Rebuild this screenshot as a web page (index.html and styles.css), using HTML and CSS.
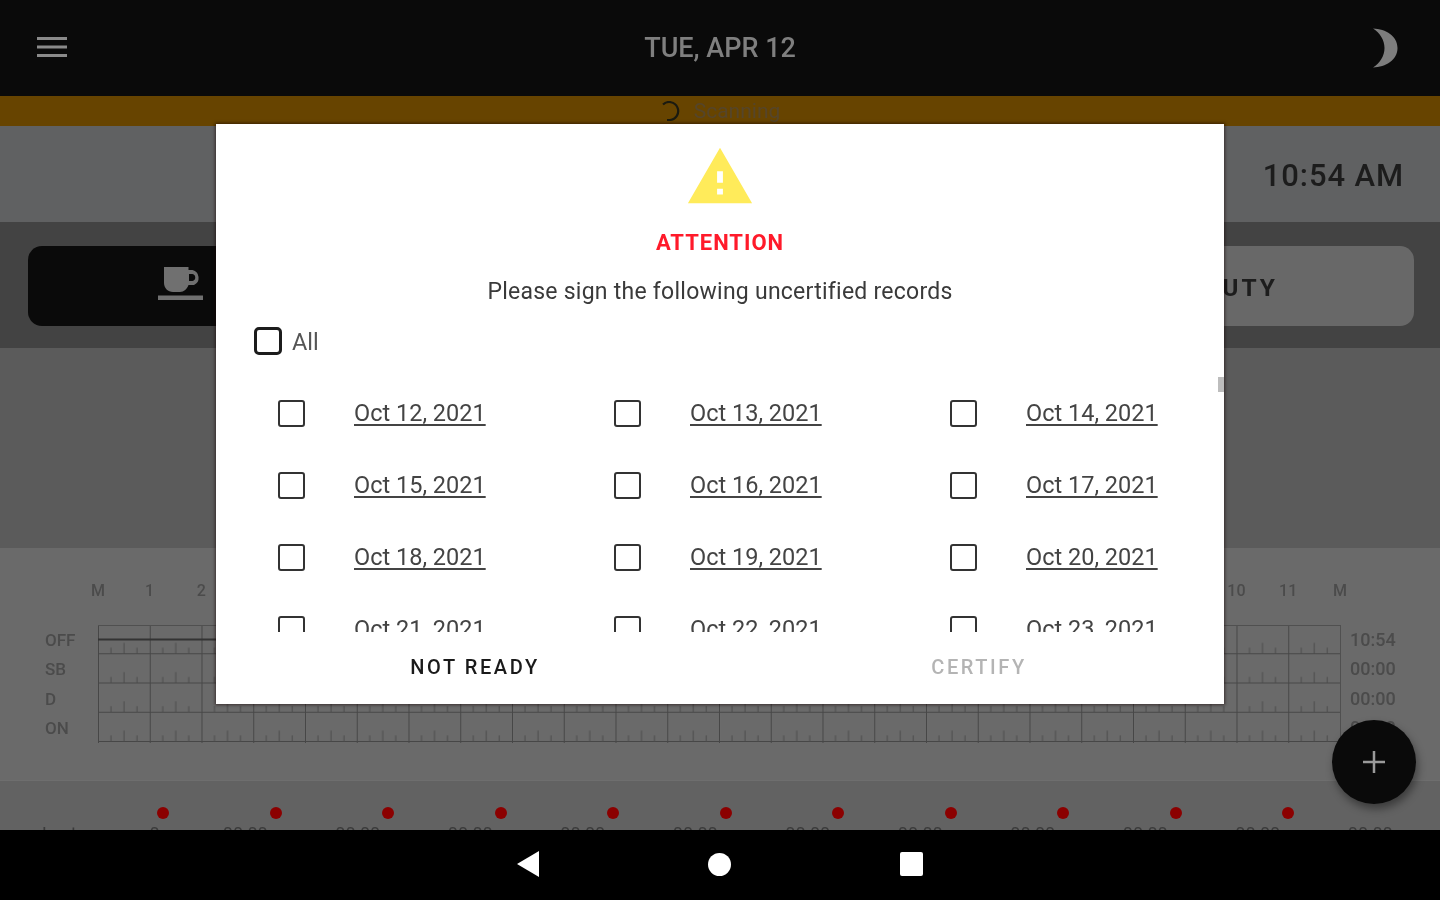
FILE: index.html
```html
<!DOCTYPE html>
<html lang="en">
<head>
<meta charset="utf-8">
<title>Attention</title>
<link rel="stylesheet" href="styles.css">
</head>
<body>
<div class="screen">
  <main class="app">
    <header class="topbar">
      <svg class="menu" viewBox="0 0 30 20"><path d="M0 1.5h30M0 10h30M0 18.500h30"/></svg>
      <h1 class="date">TUE, APR 12</h1>
      <svg class="moon" viewBox="0 0 26 40"><path d="M1 .5C14 1 25.500 8 25.500 20S14 39 1 39.500C8 35 12.500 28 12.500 20S8 5 1 .5z"/></svg>
    </header>
    <div class="scanbar">
      <svg class="spinner" viewBox="0 0 20 20"><path d="M3 3.500A9 9 0 1 1 10 19H7"/></svg>
      <span class="scantext">Scanning</span>
    </div>
    <div class="timestrip"><span class="clock">10:54 AM</span></div>
    <div class="statusband">
      <div class="dutybtn dutybtn-off">
        <svg class="cup" viewBox="0 0 46 33"><path d="M6 0h24.500v3h4A8 8 0 0 1 36 18H30.500C29 22 26 25 22 25H15C10 25 6 21 6 16V0zM31 7v7h3.500A3.600 3.600 0 0 0 34.500 7zM0 28.500h45V33H0z" fill-rule="evenodd"/></svg>
      </div>
      <div class="dutybtn dutybtn-on">ON DUTY</div>
    </div>
    <div class="blank"></div>
    <section class="chart">
      <div class="hours">
        <span>M</span><span>1</span><span>2</span><span>3</span><span>4</span><span>5</span><span>6</span><span>7</span><span>8</span><span>9</span><span>10</span><span>11</span><span>N</span><span>1</span><span>2</span><span>3</span><span>4</span><span>5</span><span>6</span><span>7</span><span>8</span><span>9</span><span>10</span><span>11</span><span>M</span>
      </div>
      <div class="chartbody">
        <div class="rowlabels"><span>OFF</span><span>SB</span><span>D</span><span>ON</span></div>
        <svg class="grid" viewBox="0 0 1243 118" width="1243" height="118">
          <defs>
            <pattern id="cell" width="51.75" height="29.25" patternUnits="userSpaceOnUse">
              <path class="gridline" d="M.5 0v29.250M0 28.750h51.750"/>
              <path class="tick" d="M13 28.750v-6M26 28.750v-11M39 28.750v-6"/>
            </pattern>
          </defs>
          <rect width="1243" height="118" fill="url(#cell)"/>
          <path class="gridtop" d="M0 .5h1243"/>
          <path class="gridend" d="M1242.500 0v118"/>
          <path class="status" d="M0 14.500h564"/>
        </svg>
        <div class="totals"><span>10:54</span><span>00:00</span><span>00:00</span><span>00:00</span></div>
      </div>
    </section>
    <section class="summary">
      <div class="dots"><i></i><i></i><i></i><i></i><i></i><i></i><i></i><i></i><i></i><i></i><i></i></div>
      <div class="sumtext"><span class="last">Last</span><span class="zero">0</span><span>00:00</span><span>00:00</span><span>00:00</span><span>00:00</span><span>00:00</span><span>00:00</span><span>00:00</span><span>00:00</span><span>00:00</span><span>00:00</span><span>00:00</span></div>
    </section>
  </main>
  <nav class="navbar">
    <svg class="nav-back" viewBox="0 0 22 26"><path d="M22 0v26L0 13z"/></svg>
    <span class="nav-home"></span>
    <span class="nav-recent"></span>
  </nav>
  <button class="fab" type="button" aria-label="Add"><svg viewBox="0 0 22 22"><path d="M11 0v22M0 11h22"/></svg></button>
  <div class="dialog" role="dialog">
    <svg class="warn" viewBox="0 0 24 24"><path fill-rule="evenodd" d="M1 21h22L12 2 1 21zm12-3h-2v-2h2v2zm0-4h-2v-4h2v4z"/></svg>
    <h2 class="attn">ATTENTION</h2>
    <p class="lead">Please sign the following uncertified records</p>
    <label class="allrow"><span class="box box-all"></span><span>All</span></label>
    <div class="records">
      <div class="rec"><span class="box"></span><a>Oct 12, 2021</a></div>
      <div class="rec"><span class="box"></span><a>Oct 13, 2021</a></div>
      <div class="rec"><span class="box"></span><a>Oct 14, 2021</a></div>
      <div class="rec"><span class="box"></span><a>Oct 15, 2021</a></div>
      <div class="rec"><span class="box"></span><a>Oct 16, 2021</a></div>
      <div class="rec"><span class="box"></span><a>Oct 17, 2021</a></div>
      <div class="rec"><span class="box"></span><a>Oct 18, 2021</a></div>
      <div class="rec"><span class="box"></span><a>Oct 19, 2021</a></div>
      <div class="rec"><span class="box"></span><a>Oct 20, 2021</a></div>
      <div class="rec"><span class="box"></span><a>Oct 21, 2021</a></div>
      <div class="rec"><span class="box"></span><a>Oct 22, 2021</a></div>
      <div class="rec"><span class="box"></span><a>Oct 23, 2021</a></div>
    </div>
    <span class="thumb"></span>
    <div class="actions">
      <button type="button" class="act act-on">NOT READY</button>
      <button type="button" class="act act-off">CERTIFY</button>
    </div>
  </div>
</div>
</body>
</html>
```
FILE: styles.css
```css
* { box-sizing: border-box; }
html, body { margin: 0; height: 100%; background: #000; }
body { font-family: Roboto, "Liberation Sans", sans-serif; overflow: hidden; }
.screen { position: relative; width: 1440px; height: 900px; overflow: hidden; display: flex; flex-direction: column; filter: blur(.6px); }
.app { height: 830px; overflow: hidden; display: flex; flex-direction: column; background: #5b5b5b; }

.topbar { height: 96px; flex: none; background: #0a0a0a; display: flex; align-items: center; justify-content: space-between; padding: 0 42px 0 37px; position: relative; }
.menu { width: 30px; height: 20px; margin-top: -2px; }
.menu path { stroke: #8a8a8a; stroke-width: 3; fill: none; }
.date { margin: 0; font-size: 27px; line-height: 98px; font-weight: 500; color: #7f7f7f; position: absolute; left: 0; right: 0; text-align: center; }
.moon { width: 26px; height: 40px; }
.moon path { fill: #7d7d7d; }

.scanbar { height: 30px; flex: none; background: #674400; display: flex; align-items: center; justify-content: center; gap: 14px; }
.spinner { width: 20px; height: 20px; fill: none; stroke: #1a1a10; stroke-width: 2.200; }
.scantext { font-size: 21px; color: #55452a; }

.timestrip { height: 96px; flex: none; background: #606162; display: flex; align-items: center; justify-content: flex-end; padding: 2px 36px 0 0; }
.clock { font-size: 31px; font-weight: 500; letter-spacing: .9px; color: #1c1c1c; }

.statusband { height: 126px; flex: none; background: #434343; padding: 24px 26px 22px 28px; display: grid; grid-template-columns: 1fr 1fr; gap: 24px; }
.dutybtn { border-radius: 14px; display: flex; align-items: center; }
.dutybtn-off { background: #0a0a0a; padding-left: 130px; }
.dutybtn-on { background: #686868; justify-content: flex-end; padding: 2px 136px 0 0; font-size: 24.500px; font-weight: 700; letter-spacing: 3px; color: #1d1d1d; }
.cup { width: 46px; height: 33px; fill: #707070; margin-top: -6px; }

.blank { height: 200px; flex: none; background: #5b5b5b; }

.chart { height: 232px; flex: none; background: #6a6a6a; padding-top: 32px; position: relative; }
.hours { display: grid; grid-template-columns: repeat(25, 51.75px); margin-left: 72px; font-size: 16px; line-height: 22px; font-weight: 500; color: #4b4b4b; text-align: center; }
.chartbody { display: flex; margin-top: 23px; }
.rowlabels { width: 98px; flex: none; padding-left: 45px; display: flex; flex-direction: column; font-size: 17px; color: #4b4b4b; font-weight: 500; }
.rowlabels span, .totals span { height: 29.250px; line-height: 30px; }
.grid { display: block; flex: none; }
.gridline { stroke: #474747; stroke-width: 1; fill: none; }
.tick { stroke: #4b4b4b; stroke-width: 1; fill: none; }
.gridtop, .gridend { stroke: #505050; stroke-width: 1; fill: none; }
.status { stroke: #333; stroke-width: 2; fill: none; }
.totals { margin-left: 9px; display: flex; flex-direction: column; font-size: 18px; color: #4b4b4b; font-weight: 500; }

.summary { height: 50px; flex: none; background: #626262; border-top: 1px solid #6e6e6e; overflow: hidden; position: relative; }
.dots { display: flex; gap: 100.500px; padding: 26px 0 0 157px; }
.dots i { width: 12px; height: 12px; flex: none; border-radius: 50%; background: #8b0000; }
.sumtext { position: absolute; left: 0; top: 42px; display: grid; grid-template-columns: 120px 69px repeat(11, 112.500px); font-size: 18px; color: #3b3b3b; text-align: center; }
.sumtext .last { text-align: left; padding-left: 42px; }

.navbar { height: 70px; flex: none; background: #000; display: flex; align-items: center; justify-content: center; gap: 169px; padding-bottom: 2px; }
.nav-back { width: 22px; height: 26px; fill: #fff; }
.nav-home { width: 23px; height: 23px; border-radius: 50%; background: #fff; }
.nav-recent { width: 23px; height: 24px; border-radius: 2px; background: #fff; }

.fab { position: absolute; left: 1332px; top: 720px; width: 84px; height: 84px; border: 0; padding: 0; border-radius: 50%; background: #0a0a0a; box-shadow: 2px 5px 9px rgba(0,0,0,.4); display: flex; align-items: center; justify-content: center; }
.fab svg { width: 22px; height: 22px; }
.fab path { stroke: #9a9a9a; stroke-width: 2.500; fill: none; }

.dialog { position: absolute; left: 216px; top: 124px; width: 1008px; height: 580px; background: #fff; box-shadow: 0 0 3px 1px rgba(20,0,0,.55); display: flex; flex-direction: column; align-items: center; padding-top: 18px; overflow: hidden; }
.warn { width: 70px; height: 70px; flex: none; fill: #ffeb5a; }
.attn { margin: 16px 0 0; font-size: 22px; line-height: 30px; font-weight: 700; letter-spacing: 1px; color: #ff1a2a; }
.lead { margin: 14px 0 0; font-size: 23px; line-height: 40px; color: #3a3a3a; letter-spacing: .25px; }
.allrow { align-self: flex-start; margin: 7px 0 0 38px; height: 46px; display: flex; align-items: center; gap: 10px; font-size: 23.500px; color: #555; }
.box { width: 27px; height: 27px; flex: none; border: 2px solid #333; border-radius: 3px; display: block; }
.box-all { width: 28px; height: 28px; border: 3px solid #1c1c1c; border-radius: 5px; margin-top: -2px; }
.records { align-self: stretch; margin-top: 12px; height: 255px; overflow: hidden; display: grid; grid-template-columns: repeat(3, 336px); grid-auto-rows: 72px; padding-left: 62px; }
.rec { display: flex; align-items: center; gap: 49px; }
.rec a { font-size: 23.500px; color: #444; text-decoration: underline; text-underline-offset: 3px; }
.thumb { position: absolute; right: 0; top: 253px; width: 6px; height: 15px; background: #bdbdbd; }
.actions { align-self: stretch; flex: 1; display: grid; grid-template-columns: 1fr 1fr; }
.act { background: none; border: 0; font-family: inherit; font-size: 20px; font-weight: 500; letter-spacing: 2.600px; padding: 0 0 3px 14px; }
.act-on { color: #1a1a1a; }
.act-off { color: #b4b4b4; }
```
